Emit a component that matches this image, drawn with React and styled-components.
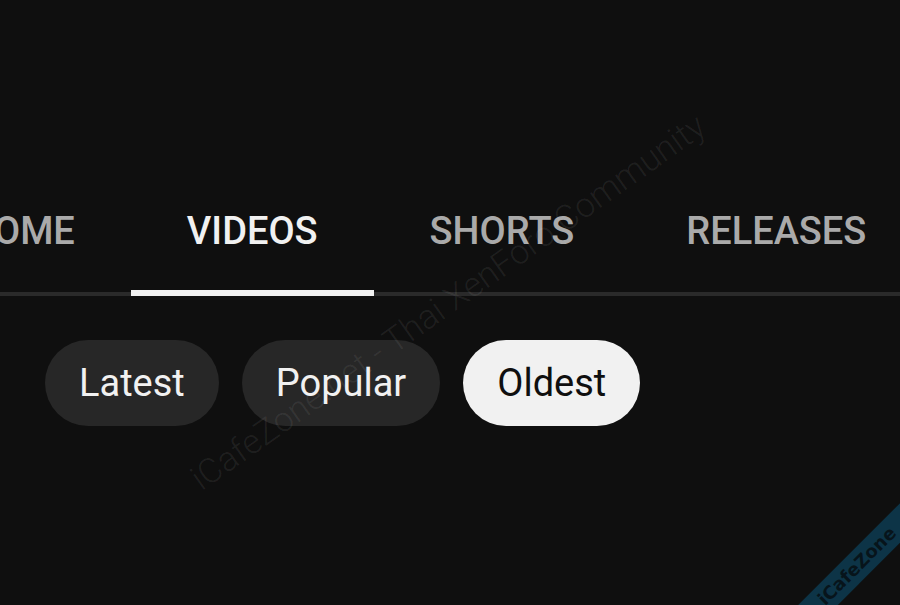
import styled, { createGlobalStyle } from "styled-components";

const GlobalStyle = createGlobalStyle`
  html, body {
    margin: 0;
    padding: 0;
    background: #0f0f0f;
  }
  body {
    font-family: Roboto, "Liberation Sans", sans-serif;
  }
`;

const Page = styled.div`
  position: relative;
  width: 900px;
  height: 605px;
  overflow: hidden;
  background: #0f0f0f;
  display: flex;
  flex-direction: column;
`;

const TabBar = styled.nav`
  margin-top: 212px;
  width: 100%;
  overflow: hidden;
  box-shadow: inset 0 -4px 0 #2a2a2a;
`;

const TabList = styled.div`
  display: flex;
  margin-left: -89px;
`;

const Tab = styled.div`
  flex: none;
  padding: 0 56px 40px;
  font-size: 38px;
  line-height: 38px;
  font-weight: 500;
  color: ${(p) => (p.$active ? "#f1f1f1" : "#aaaaaa")};
  border-bottom: 6px solid ${(p) => (p.$active ? "#f1f1f1" : "transparent")};
  white-space: nowrap;
`;

const ChipRow = styled.div`
  display: flex;
  gap: 23px;
  margin-top: 44px;
  padding-left: 45px;
`;

const Chip = styled.div`
  flex: none;
  height: 86px;
  padding: 0 34px;
  border-radius: 43px;
  font-size: 38px;
  line-height: 86px;
  font-weight: 400;
  background: ${(p) => (p.$selected ? "#f1f1f1" : "#272727")};
  color: ${(p) => (p.$selected ? "#0f0f0f" : "#f1f1f1")};
`;

const Watermark = styled.div`
  position: absolute;
  left: 448px;
  top: 302px;
  transform: translate(-50%, -50%) rotate(-35.4deg);
  font-size: 34.5px;
  font-weight: 300;
  line-height: 1;
  color: rgba(255, 255, 255, 0.07);
  white-space: nowrap;
  pointer-events: none;
`;

const Ribbon = styled.div`
  position: absolute;
  right: -77px;
  bottom: 25px;
  width: 240px;
  height: 28px;
  transform: rotate(-45deg);
  background: #0d3447;
  color: #07141b;
  font-family: "DejaVu Sans", sans-serif;
  font-weight: 700;
  font-size: 18px;
  line-height: 28px;
  text-align: center;
  pointer-events: none;
`;

const tabs = ["HOME", "VIDEOS", "SHORTS", "RELEASES"];
const chips = ["Latest", "Popular", "Oldest"];

export default function App() {
  return (
    <>
      <GlobalStyle />
      <Page>
        <TabBar>
          <TabList>
            {tabs.map((t) => (
              <Tab key={t} $active={t === "VIDEOS"}>
                {t}
              </Tab>
            ))}
          </TabList>
        </TabBar>
        <ChipRow>
          {chips.map((c) => (
            <Chip key={c} $selected={c === "Oldest"}>
              {c}
            </Chip>
          ))}
        </ChipRow>
        <Watermark>iCafeZone.net - Thai XenForo Community</Watermark>
        <Ribbon>iCafeZone</Ribbon>
      </Page>
    </>
  );
}
